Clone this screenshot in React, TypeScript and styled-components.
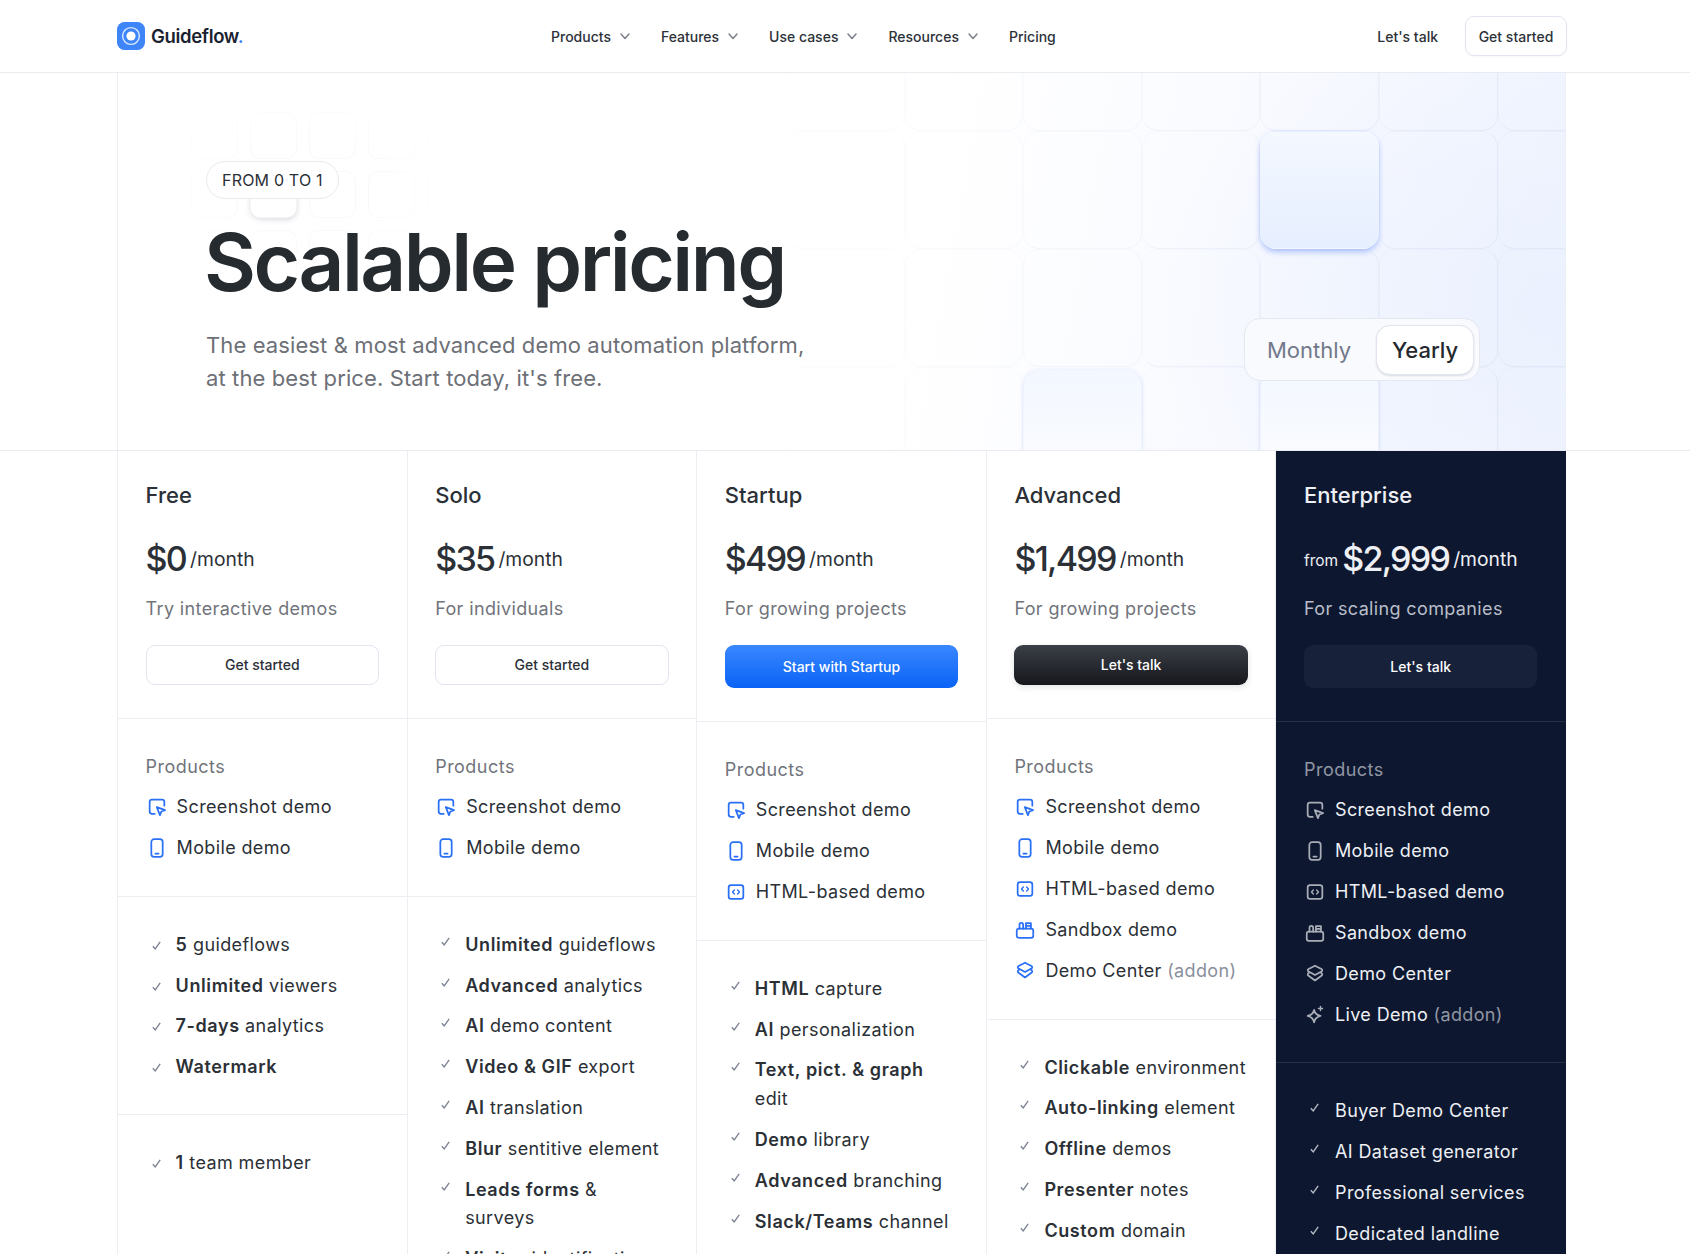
import React from "react";
import styled, { createGlobalStyle } from "styled-components";

const GlobalStyle = createGlobalStyle`
  html, body {
    margin: 0;
    padding: 0;
    background: #fff;
    font-family: Inter, "Noto Sans", sans-serif;
    color: #2b3036;
  }
  * { box-sizing: border-box; }
`;

const Page = styled.div`
  height: 100vh;
  overflow: hidden;
`;

const Header = styled.header`
  height: 73px;
  border-bottom: 1px solid #e9ebf0;
  padding: 0 123px 0 117px;
  display: flex;
  align-items: center;
`;

const Brand = styled.div`
  flex: 0 0 434px;
  display: flex;
  align-items: center;
  gap: 6px;
  font-size: 18.5px;
  font-weight: 600;
  letter-spacing: -0.018em;
  color: #1a2130;
  span { color: #3b82f6; }
`;

const Nav = styled.nav`
  display: flex;
  align-items: center;
  gap: 29px;
`;

const NavItem = styled.a`
  display: flex;
  align-items: center;
  gap: 7px;
  font-size: 14px;
  font-weight: 500;
  color: #2d3239;
  svg { color: #7b808a; }
`;

const HeaderActions = styled.div`
  margin-left: auto;
  display: flex;
  align-items: center;
  gap: 27px;
  font-size: 14px;
  font-weight: 500;
`;

const HeaderButton = styled.button`
  height: 40px;
  width: 102px;
  background: #fff;
  border: 1px solid #e3e5ee;
  border-radius: 9px;
  font: inherit;
  color: #2d3239;
  box-shadow: 0 1px 2px rgba(30, 40, 80, 0.04);
`;

const HeroBand = styled.div`
  border-bottom: 1px solid #e9ebf0;
  padding: 0 124px 0 117px;
`;

const Hero = styled.section`
  position: relative;
  height: 377px;
  overflow: hidden;
  border-left: 1px solid #eceef3;
  border-right: 1px solid #eceef3;
  padding: 88px 85px 0 88px;
  display: flex;
  justify-content: space-between;
`;

const HeroWash = styled.div`
  position: absolute;
  inset: 0;
  background:
    radial-gradient(420px 300px at 100% 62%, #ebf1fe 0%, rgba(235, 241, 254, 0) 100%),
    linear-gradient(100deg, rgba(255, 255, 255, 0) 55%, #f6f8ff 85%, #eff4fe 100%);
`;

const BigGrid = styled.div`
  position: absolute;
  left: 668px;
  top: -60px;
  display: grid;
  grid-template-columns: repeat(7, 118.6px);
  grid-auto-rows: 118px;
`;

const BigCell = styled.div<{ $fade: number; $kind?: "lit" | "soft" }>`
  border-radius: 16px;
  border: 1px solid rgba(120, 135, 190, ${(p) => (p.$kind === "lit" ? 0 : 0.09 * p.$fade)});
  border-top-color: rgba(120, 135, 190, ${(p) => (p.$kind === "lit" ? 0 : 0.04 * p.$fade)});
  border-left-color: rgba(120, 135, 190, ${(p) => (p.$kind === "lit" ? 0 : 0.04 * p.$fade)});
  margin-top: ${(p) => (p.$kind === "soft" ? "3px" : "0")};
  background: ${(p) =>
    p.$kind === "lit"
      ? "linear-gradient(180deg, #f4f8ff 0%, #e6efff 100%)"
      : p.$kind === "soft"
      ? "linear-gradient(180deg, #f3f7ff 0%, #f9fbff 70%)"
      : "transparent"};
  box-shadow: ${(p) =>
    p.$kind === "lit"
      ? "0 4px 6px -1px rgba(88, 128, 250, 0.4), 0 1px 4px rgba(120, 155, 250, 0.18)"
      : p.$kind === "soft"
      ? "0 0 4px rgba(120, 155, 250, 0.2)"
      : "none"};
`;

const SmallGrid = styled.div`
  position: absolute;
  left: 14px;
  top: 39px;
  display: grid;
  grid-template-columns: repeat(6, 47px);
  grid-auto-rows: 47px;
  gap: 12px;
  -webkit-mask-image: radial-gradient(170px 110px at 52% 45%, #000 35%, transparent 100%);
  mask-image: radial-gradient(170px 110px at 52% 45%, #000 35%, transparent 100%);
`;

const SmallCell = styled.div<{ $lit?: boolean }>`
  border-radius: 10px;
  border: 1px solid rgba(40, 50, 80, ${(p) => (p.$lit ? 0.05 : 0.028)});
  background: #fff;
  box-shadow: ${(p) => (p.$lit ? "0 2px 5px rgba(30, 40, 70, 0.16)" : "none")};
`;

const HeroCopy = styled.div`
  position: relative;
`;

const Pill = styled.div`
  display: inline-flex;
  align-items: center;
  height: 38px;
  padding: 0 15px;
  border: 1px solid #e9eaef;
  border-radius: 19px;
  background: rgba(255, 255, 255, 0.96);
  font-size: 16px;
  letter-spacing: 0.012em;
  color: #2b3036;
`;

const Title = styled.h1`
  margin: 14px 0 0 -2px;
  font-size: 80px;
  line-height: 97px;
  font-weight: 600;
  letter-spacing: -0.031em;
  color: #262b30;
`;

const Lead = styled.p`
  margin: 19px 0 0;
  font-size: 22px;
  line-height: 33px;
  letter-spacing: 0.005em;
  color: #6d7076;
`;

const Toggle = styled.div`
  position: relative;
  align-self: flex-end;
  margin-bottom: 69px;
  width: 236px;
  height: 63px;
  display: flex;
  align-items: center;
  justify-content: space-between;
  padding: 0 5px 0 22px;
  background: #f9fafd;
  border: 1px solid #e5e8f1;
  border-radius: 16px;
`;

const ToggleOff = styled.span`
  font-size: 22px;
  color: #71788a;
`;

const ToggleOn = styled.span`
  width: 98px;
  height: 50px;
  display: flex;
  align-items: center;
  justify-content: center;
  background: #fff;
  border: 1px solid #e3e5ee;
  border-radius: 14px;
  font-size: 22px;
  font-weight: 500;
  color: #25292f;
  box-shadow: 0 1px 2px rgba(30, 40, 80, 0.14);
`;

const Columns = styled.div`
  margin: 0 124px 0 117px;
  display: grid;
  grid-template-columns: repeat(5, 1fr);
  border-left: 1px solid #eceef3;
`;

const Column = styled.div<{ $dark?: boolean }>`
  border-right: 1px solid ${(p) => (p.$dark ? "transparent" : "#eceef3")};
  background: ${(p) => (p.$dark ? "#0d1830" : "#fff")};
  color: ${(p) => (p.$dark ? "#eef0f4" : "#2b3036")};
`;

const Section = styled.div<{ $dark?: boolean }>`
  padding: 34px 27.6px 32px;
  border-top: 1px solid ${(p) => (p.$dark ? "rgba(255,255,255,0.11)" : "#eceef3")};
  &:first-child {
    border-top: none;
    padding: 28px 27.6px 33px;
  }
`;

const PlanName = styled.h2`
  margin: 0;
  font-size: 22px;
  line-height: 32px;
  font-weight: 500;
`;

const PriceRow = styled.div`
  margin-top: 25px;
  height: 44px;
  display: flex;
  align-items: center;
  gap: 4px;
`;

const From = styled.span`
  font-size: 15.5px;
  margin-top: 4px;
`;

const Amount = styled.span`
  font-size: 34px;
  font-weight: 500;
  letter-spacing: -0.05em;
`;

const Per = styled.span`
  font-size: 19.3px;
  margin-top: 2px;
`;

const Tagline = styled.p<{ $dark?: boolean }>`
  margin: 14px 0 0;
  font-size: 18px;
  line-height: 29px;
  letter-spacing: 0.02em;
  color: ${(p) => (p.$dark ? "#b9bdc7" : "#71747b")};
`;

type ButtonKind = "outline" | "blue" | "black" | "navy";

const buttonLook: Record<ButtonKind, string> = {
  outline: "height:40px; padding-bottom:3px; background:#fff; border:1px solid #e3e5ee; color:#2b3036;",
  blue: "height:43px; background:linear-gradient(180deg,#3a87ff,#0a63f6); border:0; color:#fff;",
  black:
    "height:40px; padding-bottom:3px; background:linear-gradient(180deg,#3b3f47,#15171c); border:0; color:#fff; box-shadow:0 2px 6px rgba(20,25,35,.12);",
  navy: "height:43px; background:#17223a; border:0; color:#fff;",
};

const PlanButton = styled.button<{ $kind: ButtonKind }>`
  display: block;
  width: 100%;
  margin-top: 22px;
  border-radius: 9px;
  font-family: inherit;
  font-size: 14px;
  font-weight: 500;
  ${(p) => buttonLook[p.$kind]}
`;

const GroupLabel = styled.div<{ $dark?: boolean }>`
  margin-top: -1px;
  font-size: 18px;
  line-height: 29px;
  letter-spacing: 0.026em;
  color: ${(p) => (p.$dark ? "#9196a3" : "#71747b")};
`;

const List = styled.ul<{ $spaced?: boolean }>`
  list-style: none;
  margin: ${(p) => (p.$spaced ? "12px 0 1px" : "0")};
  padding: 0;
  display: flex;
  flex-direction: column;
  gap: 12px;
`;

const ProductRow = styled.li`
  display: flex;
  align-items: center;
  gap: 9px;
  font-size: 18px;
  line-height: 28.9px;
  letter-spacing: 0.02em;
`;

const ProductIcon = styled.svg<{ $dark?: boolean }>`
  flex: none;
  width: 22px;
  height: 22px;
  color: ${(p) => (p.$dark ? "#a9adb7" : "#2a70f6")};
  fill: none;
  stroke: currentColor;
  stroke-width: 1.9;
  stroke-linecap: round;
  stroke-linejoin: round;
`;

const Addon = styled.span<{ $dark?: boolean }>`
  color: ${(p) => (p.$dark ? "#9196a3" : "#8a8f9c")};
`;

const FeatureRow = styled.li<{ $top?: boolean }>`
  display: flex;
  align-items: ${(p) => (p.$top ? "flex-start" : "center")};
  font-size: 18px;
  line-height: 28.8px;
  letter-spacing: 0.022em;
  b {
    font-weight: 600;
    letter-spacing: 0.033em;
  }
`;

const Check = styled.svg<{ $top?: boolean; $dark?: boolean }>`
  flex: none;
  width: 11px;
  height: 11px;
  margin: ${(p) => (p.$top ? "5px" : "0")} ${(p) => (p.$dark ? "15px" : "14px")} 0 5px;
  color: ${(p) => (p.$dark ? "#b5b9c3" : "#7d8494")};
  fill: none;
  stroke: currentColor;
  stroke-width: 1.5;
`;

const Chevron = () => (
  <svg width="14" height="14" viewBox="0 0 14 14" fill="none" stroke="currentColor" strokeWidth="1.5" strokeLinecap="round" strokeLinejoin="round">
    <path d="M3 5l4 4.5L11 5" />
  </svg>
);

const Logo = () => (
  <svg width="28" height="28" viewBox="0 0 28 28">
    <rect width="28" height="28" rx="7.5" fill="#3d85f8" />
    <circle cx="14" cy="14" r="8.4" fill="none" stroke="#dfeafe" strokeWidth="1.4" />
    <circle cx="14" cy="14" r="4.6" fill="#fff" />
  </svg>
);

type IconName = "shot" | "mobile" | "html" | "sandbox" | "center" | "live";

const iconPaths: Record<IconName, React.ReactNode> = {
  shot: (
    <>
      <path d="M9.5 19.5H6.5a2.5 2.5 0 0 1-2.5-2.5V6.5A2.5 2.5 0 0 1 6.5 4h11A2.5 2.5 0 0 1 20 6.5v4" />
      <path d="M11.8 12.2l9 3.2-4 1.5-1.6 4z" />
    </>
  ),
  mobile: (
    <>
      <rect x="5.8" y="2.4" width="12.4" height="19.2" rx="3" />
      <path d="M10.3 18.2h3.4" />
    </>
  ),
  html: (
    <>
      <rect x="4" y="4.5" width="16" height="15" rx="2.6" />
      <path d="M10.2 9.8L8.2 12l2 2.2M13.8 9.8l2 2.2-2 2.2" strokeWidth="1.5" />
    </>
  ),
  sandbox: (
    <>
      <rect x="3" y="10.5" width="18" height="10" rx="2.2" />
      <path d="M6 10.5V6.2C6 5 6.8 4.2 8 4.2s2 .8 2 2v4.3M13 10.5V4.5h5.5v6M13 7.5h5.5" />
    </>
  ),
  center: (
    <>
      <path d="M12 3l7 3.6c1.2.6 1.2 2 0 2.6L12 13 5 9.2c-1.2-.6-1.2-2 0-2.6z" />
      <path d="M6 10.4l-1 .6c-1.2.7-1.2 2.3 0 3l7 5 7-5c1.2-.7 1.2-2.3 0-3l-1-.6" />
    </>
  ),
  live: (
    <>
      <path d="M11 6.5c.8 3.8 2.4 5.4 7 6.5-4.6 1.1-6.2 2.7-7 7-.8-4.3-2.4-5.9-7-7 4.6-1.1 6.2-2.7 7-6.5z" />
      <path d="M18 2.8v4.4M15.8 5h4.4" strokeWidth="1.6" />
    </>
  ),
};

const Icon = ({ name, dark }: { name: IconName; dark?: boolean }) => (
  <ProductIcon viewBox="0 0 24 24" $dark={dark}>
    {iconPaths[name]}
  </ProductIcon>
);

interface Product {
  icon: IconName;
  label: string;
  addon?: boolean;
}

interface Feature {
  bold?: string;
  rest?: string;
}

interface Plan {
  name: string;
  from?: boolean;
  price: string;
  tagline: string;
  button: string;
  kind: ButtonKind;
  products: Product[];
  groups: Feature[][];
  topChecks?: boolean;
  dark?: boolean;
}

const shot: Product = { icon: "shot", label: "Screenshot demo" };
const mobile: Product = { icon: "mobile", label: "Mobile demo" };
const html: Product = { icon: "html", label: "HTML-based demo" };
const sandbox: Product = { icon: "sandbox", label: "Sandbox demo" };

const plans: Plan[] = [
  {
    name: "Free",
    price: "$0",
    tagline: "Try interactive demos",
    button: "Get started",
    kind: "outline",
    products: [shot, mobile],
    groups: [
      [
        { bold: "5", rest: " guideflows" },
        { bold: "Unlimited", rest: " viewers" },
        { bold: "7-days", rest: " analytics" },
        { bold: "Watermark" },
      ],
      [{ bold: "1", rest: " team member" }],
    ],
  },
  {
    name: "Solo",
    price: "$35",
    tagline: "For individuals",
    button: "Get started",
    kind: "outline",
    topChecks: true,
    products: [shot, mobile],
    groups: [
      [
        { bold: "Unlimited", rest: " guideflows" },
        { bold: "Advanced", rest: " analytics" },
        { bold: "AI", rest: " demo content" },
        { bold: "Video & GIF", rest: " export" },
        { bold: "AI", rest: " translation" },
        { bold: "Blur", rest: " sentitive element" },
        { bold: "Leads forms", rest: " & surveys" },
        { bold: "Visitor", rest: " identification" },
      ],
    ],
  },
  {
    name: "Startup",
    price: "$499",
    tagline: "For growing projects",
    button: "Start with Startup",
    kind: "blue",
    topChecks: true,
    products: [shot, mobile, html],
    groups: [
      [
        { bold: "HTML", rest: " capture" },
        { bold: "AI", rest: " personalization" },
        { bold: "Text, pict. & graph", rest: " edit" },
        { bold: "Demo", rest: " library" },
        { bold: "Advanced", rest: " branching" },
        { bold: "Slack/Teams", rest: " channel" },
      ],
    ],
  },
  {
    name: "Advanced",
    price: "$1,499",
    tagline: "For growing projects",
    button: "Let's talk",
    kind: "black",
    topChecks: true,
    products: [shot, mobile, html, sandbox, { icon: "center", label: "Demo Center", addon: true }],
    groups: [
      [
        { bold: "Clickable", rest: " environment" },
        { bold: "Auto-linking", rest: " element" },
        { bold: "Offline", rest: " demos" },
        { bold: "Presenter", rest: " notes" },
        { bold: "Custom", rest: " domain" },
      ],
    ],
  },
  {
    name: "Enterprise",
    from: true,
    price: "$2,999",
    tagline: "For scaling companies",
    button: "Let's talk",
    kind: "navy",
    topChecks: true,
    dark: true,
    products: [
      shot,
      mobile,
      html,
      sandbox,
      { icon: "center", label: "Demo Center" },
      { icon: "live", label: "Live Demo", addon: true },
    ],
    groups: [
      [
        { rest: "Buyer Demo Center" },
        { rest: "AI Dataset generator" },
        { rest: "Professional services" },
        { rest: "Dedicated landline" },
      ],
    ],
  },
];

const navLinks = ["Products", "Features", "Use cases", "Resources"];

const bigCells = Array.from({ length: 28 }, (_, i) => {
  const col = i % 7;
  const row = Math.floor(i / 7);
  let kind: "lit" | "soft" | undefined;
  if (row === 1 && col === 4) kind = "lit";
  if (row === 3 && (col === 2 || col === 4)) kind = "soft";
  return { fade: Math.min(1, 0.3 + col * 0.18), kind };
});

function PlanColumn({ plan }: { plan: Plan }) {
  const dark = plan.dark;
  return (
    <Column $dark={dark}>
      <Section $dark={dark}>
        <PlanName>{plan.name}</PlanName>
        <PriceRow>
          {plan.from && <From>from</From>}
          <Amount>{plan.price}</Amount>
          <Per>/month</Per>
        </PriceRow>
        <Tagline $dark={dark}>{plan.tagline}</Tagline>
        <PlanButton $kind={plan.kind}>{plan.button}</PlanButton>
      </Section>
      <Section $dark={dark}>
        <GroupLabel $dark={dark}>Products</GroupLabel>
        <List $spaced>
          {plan.products.map((p) => (
            <ProductRow key={p.label}>
              <Icon name={p.icon} dark={dark} />
              <span>
                {p.label}
                {p.addon && <Addon $dark={dark}> (addon)</Addon>}
              </span>
            </ProductRow>
          ))}
        </List>
      </Section>
      {plan.groups.map((group, g) => (
        <Section key={g} $dark={dark}>
          <List>
            {group.map((f) => (
              <FeatureRow key={(f.bold ?? "") + (f.rest ?? "")} $top={plan.topChecks}>
                <Check viewBox="0 0 12 12" $top={plan.topChecks} $dark={dark}>
                  <path d="M2 6.8l2.6 3L10 2" />
                </Check>
                <span>
                  {f.bold && <b>{f.bold}</b>}
                  {f.rest}
                </span>
              </FeatureRow>
            ))}
          </List>
        </Section>
      ))}
    </Column>
  );
}

export default function App() {
  return (
    <Page>
      <GlobalStyle />
      <Header>
        <Brand>
          <Logo />
          <div>
            Guideflow<span>.</span>
          </div>
        </Brand>
        <Nav>
          {navLinks.map((link) => (
            <NavItem key={link}>
              {link}
              <Chevron />
            </NavItem>
          ))}
          <NavItem>Pricing</NavItem>
        </Nav>
        <HeaderActions>
          <span>Let's talk</span>
          <HeaderButton>Get started</HeaderButton>
        </HeaderActions>
      </Header>
      <HeroBand>
        <Hero>
          <HeroWash />
          <BigGrid>
            {bigCells.map((c, i) => (
              <BigCell key={i} $fade={c.fade} $kind={c.kind} />
            ))}
          </BigGrid>
          <SmallGrid>
            {Array.from({ length: 18 }, (_, i) => (
              <SmallCell key={i} $lit={i === 8} />
            ))}
          </SmallGrid>
          <HeroCopy>
            <Pill>FROM 0 TO 1</Pill>
            <Title>Scalable pricing</Title>
            <Lead>
              The easiest &amp; most advanced demo automation platform,
              <br />
              at the best price. Start today, it's free.
            </Lead>
          </HeroCopy>
          <Toggle>
            <ToggleOff>Monthly</ToggleOff>
            <ToggleOn>Yearly</ToggleOn>
          </Toggle>
        </Hero>
      </HeroBand>
      <Columns>
        {plans.map((plan) => (
          <PlanColumn key={plan.name} plan={plan} />
        ))}
      </Columns>
    </Page>
  );
}
